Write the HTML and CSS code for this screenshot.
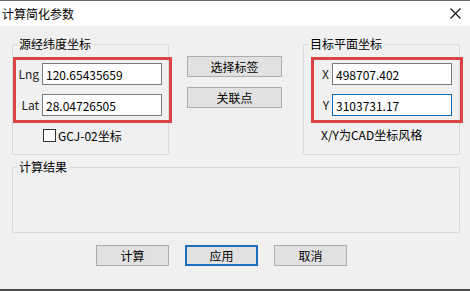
FILE: index.html
```html
<!DOCTYPE html>
<html>
<head>
	<meta charset="utf-8">
	<title>计算简化参数</title>
	<link rel="stylesheet" href="styles.css">
</head>
<body>
	<div class="window">
		<div class="titlebar">
			<span class="title">计算简化参数</span>
			<svg class="close" width="11" height="11" viewBox="0 0 11 11"><path d="M0.5 0.5L10.5 10.5M10.5 0.5L0.5 10.5" stroke="#111" stroke-width="1.1" fill="none"/></svg>
		</div>
		<div class="content">
			<div class="top-row">
				<fieldset class="group">
					<legend>源经纬度坐标</legend>
					<div class="mark mark-src">
						<div class="fields fields-src">
							<label>Lng</label><input type="text" value="120.65435659">
							<label>Lat</label><input type="text" value="28.04726505">
						</div>
					</div>
					<div class="check-row"><span class="check"></span><span>GCJ-02坐标</span></div>
				</fieldset>
				<div class="mid-buttons">
					<button class="btn wide">选择标签</button>
					<button class="btn wide">关联点</button>
				</div>
				<fieldset class="group">
					<legend>目标平面坐标</legend>
					<div class="mark mark-dst">
						<div class="fields fields-dst">
							<label>X</label><input type="text" value="498707.402">
							<label>Y</label><input type="text" class="focused" value="3103731.17">
						</div>
					</div>
					<div class="note">X/Y为CAD坐标风格</div>
				</fieldset>
			</div>
			<fieldset class="group result">
				<legend>计算结果</legend>
			</fieldset>
			<div class="actions">
				<button class="btn">计算</button>
				<button class="btn default">应用</button>
				<button class="btn">取消</button>
			</div>
		</div>
		<div class="edge"></div>
	</div>
</body>
</html>
```

FILE: styles.css
```css
*{box-sizing: border-box;}
html,body{margin: 0;padding: 0;}
body{font-family: "Noto Sans CJK SC", "Noto Sans", sans-serif;font-size: 12px;color: #000;background: #f0f0f0;}
.window{width: 470px;height: 291px;display: flex;flex-direction: column;background: #f0f0f0;overflow: hidden;}

.titlebar{height: 26px;background: #fff;border-top: 1px solid #6a6a6a;display: flex;align-items: center;justify-content: space-between;padding: 0 9px 0 2px;}
.title{line-height: 16px;}
.close{display: block;}

.content{flex: 1;padding: 10px 10px 0 12px;}
.top-row{display: flex;align-items: stretch;}

.group{margin: 0;padding: 0 0 12px 0;min-width: 0;border: 1px solid #d9d9d9;border-radius: 2px;width: 157px;}
.group legend{margin-left: 4px;padding: 0 2px;line-height: 16px;}

.mark{border: 3px solid #d94444;margin-top: 5px;}
.mark-src{width: 159px;}
.mark-dst{width: 152px;margin-left: 7px;}

.fields{display: grid;grid-template-rows: 22px 22px;row-gap: 9px;column-gap: 3px;padding: 3px 0 4px 0;align-items: center;}
.fields-src{grid-template-columns: 23px 120px;}
.fields-dst{grid-template-columns: 15px 120px;}
.fields label{justify-self: end;color: #222;line-height: 16px;}
.fields input{width: 120px;height: 22px;border: 1px solid #7a7a7a;background: #fff;font: inherit;color: #000;padding: 0 3px;margin: 0;outline: none;}
.fields input.focused{border-color: #0a6dc2;}

.check-row{display: flex;align-items: center;gap: 2px;margin-top: 5px;height: 14px;padding-left: 30px;}
.check{width: 13px;height: 13px;border: 1px solid #333;background: #fff;}
.note{margin-top: 5px;height: 14px;line-height: 14px;padding-left: 17px;}

.mid-buttons{display: flex;flex-direction: column;gap: 10px;margin: 20px 21px 0 18px;}

.btn{height: 21px;width: 73px;padding: 0;margin: 0;background: #e1e1e1;border: 1px solid #adadad;font: inherit;color: #000;line-height: 19px;}
.btn.wide{width: 95px;}
.btn.default{border: 2px solid #1c6cc0;line-height: 17px;}

.result{width: 448px;height: 74px;margin-top: 4px;padding: 0;}

.actions{display: flex;gap: 16px;margin-top: 12px;padding-left: 84px;}

.edge{height: 2px;background: #4a4a4a;}
```
